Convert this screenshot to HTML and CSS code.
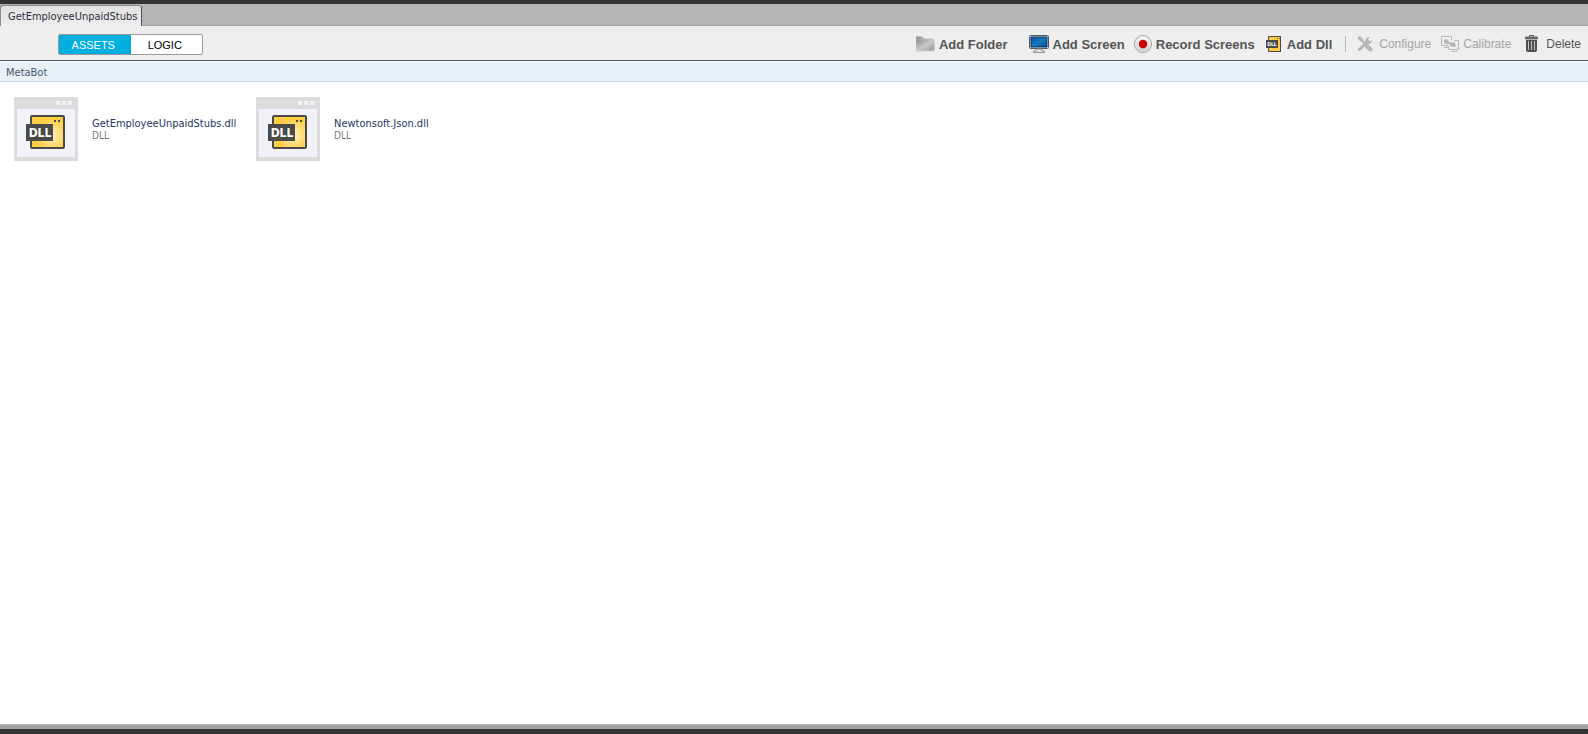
FILE: index.html
```html
<!DOCTYPE html>
<html lang="en">
<head>
  <meta charset="UTF-8" />
  <meta name="viewport" content="width=device-width, initial-scale=1.0"/>
  <title>GetEmployeeUnpaidStubs</title>
  <link rel="stylesheet" href="styles.css">
</head>
<body>

  <!-- Shared gradients -->
  <svg class="defs" aria-hidden="true">
    <defs>
      <radialGradient id="dllGold" cx="0.62" cy="0.6" r="0.5">
        <stop offset="0" stop-color="#fff1c4"/>
        <stop offset="1" stop-color="#ffce45"/>
      </radialGradient>
      <linearGradient id="folderGrey" x1="0" y1="0" x2="1" y2="1">
        <stop offset="0" stop-color="#8c8c8c"/>
        <stop offset="0.5" stop-color="#c9c9c9"/>
        <stop offset="1" stop-color="#999"/>
      </linearGradient>
      <linearGradient id="screenBlue" x1="0" y1="0" x2="1" y2="1">
        <stop offset="0" stop-color="#0a4f93"/>
        <stop offset="0.5" stop-color="#1679be"/>
        <stop offset="1" stop-color="#064c8d"/>
      </linearGradient>
      <linearGradient id="recordGrey" x1="0" y1="0" x2="0" y2="1">
        <stop offset="0" stop-color="#fff"/>
        <stop offset="1" stop-color="#c4c4c4"/>
      </linearGradient>
    </defs>
  </svg>

  <nav class="tabs">
    <button class="tab">GetEmployeeUnpaidStubs</button>
  </nav>

  <header class="toolbar">
    <div class="switch">
      <button class="active">ASSETS</button>
      <button>LOGIC</button>
    </div>

    <div class="actions">
      <button class="action strong folder">
        <svg width="20" height="20" viewBox="0 0 20 20">
          <path d="M1 3.500q0-1 1-1h5l2 2h8q1 0 1 1v10q0 1-1 1H2q-1 0-1-1z" fill="url(#folderGrey)"/>
          <path d="M0 17h20" stroke="#d0d0d0"/>
          <path d="M2 6.500h7l2-1h8.500v10q0 1-1 1H3q-1 0-1-1z" fill="url(#folderGrey)"/>
        </svg>
        Add Folder
      </button>
      <button class="action strong screen">
        <svg width="20" height="20" viewBox="0 0 20 20">
          <rect x="0.500" y="1.500" width="19" height="13" rx="1" fill="#e3e7e8" stroke="#50595d"/>
          <rect x="2" y="3" width="16" height="10" fill="url(#screenBlue)" stroke="#073764"/>
          <path d="M7 15h6v2h2.500v1.500h-11V17H7z" fill="#dfe4e4" stroke="#7b8583" stroke-width=".8"/>
        </svg>
        Add Screen
      </button>
      <button class="action strong record">
        <svg width="18" height="20" viewBox="0 0 18 20">
          <circle cx="9" cy="10" r="8.500" fill="url(#recordGrey)" stroke="#a3a3a3"/>
          <circle cx="9" cy="10" r="7.300" fill="none" stroke="#e8e8e8"/>
          <circle cx="9" cy="10" r="4.200" fill="#c00"/>
        </svg>
        Record Screens
      </button>
      <button class="action strong dll">
        <svg width="15" height="20" viewBox="0 0 15 20">
          <rect x="2.500" y="2.500" width="12" height="15" fill="#ffce45" stroke="#4a4a48"/>
          <path d="M11 4h1v1h-1zM13 4h1v1h-1z" fill="#4a4a48"/>
          <rect y="6" width="12" height="8" fill="#4a4a48"/>
          <text x="6" y="12" text-anchor="middle" class="dll-small">DLL</text>
        </svg>
        Add Dll
      </button>
      <span class="divider"></span>
      <button class="action configure" disabled>
        <svg width="16" height="20" viewBox="0 0 16 20">
          <path d="M2.500 15.500l8-8" stroke="#b5b5b5" stroke-width="3" stroke-linecap="round"/>
          <path d="M12.500 3a4 4 0 0 0-4 5.500 4 4 0 0 0 7-2.500l-2.500 1.500-1.700-1.700z" fill="#b5b5b5"/>
          <path d="M1 3l2-1 3 3 .5 1.500 3 3-1.500 1.500-3-3L3 7 .500 4z" fill="#b5b5b5"/>
          <path d="M10 12l3.500 3.500" stroke="#b5b5b5" stroke-width="4" stroke-linecap="round"/>
        </svg>
        Configure
      </button>
      <button class="action calibrate" disabled>
        <svg width="18" height="20" viewBox="0 0 18 20">
          <path d="M7 11.500H.5v-9h10V6M13 6.500h4.500v9h-10V12M3 13.500h4M10 17.500h6" fill="none" stroke="#b8b8b8"/>
          <path d="M3 6l2-1 2 1 1 2-1 2H4L3 8zM10 9l2-1 2 1 1 2-1 2h-3l-2-1z" fill="#b8b8b8"/>
          <path d="M6 8l6 3" stroke="#b8b8b8" stroke-width="2"/>
        </svg>
        Calibrate
      </button>
      <button class="action delete">
        <svg width="14" height="20" viewBox="0 0 14 20">
          <path d="M4.500 3V1.500h4V3" fill="none" stroke="#555"/>
          <path d="M.5 3h12v2H.5z" fill="#777" stroke="#4c4c4c" stroke-width=".7"/>
          <path d="M1 6h11v10q0 2-2 2H3q-2 0-2-2z" fill="#505050"/>
          <path d="M3.500 7v9M6.500 7v9M9.500 7v9" stroke="#c2c2c2"/>
        </svg>
        Delete
      </button>
    </div>
  </header>

  <div class="path">MetaBot</div>

  <main class="assets">
    <div class="asset">
      <svg width="64" height="64" viewBox="0 0 64 64">
        <rect width="64" height="64" fill="#dcdcdc"/>
        <rect x="3" y="12" width="58" height="48" fill="#f2f3fa"/>
        <path d="M42 4h4v4h-4zM48 4h4v4h-4zM54 4h4v4h-4z" fill="#f2f3fa"/>
        <rect x="17" y="19" width="33" height="32" rx="1" fill="url(#dllGold)" stroke="#4a4a48" stroke-width="2"/>
        <path d="M40 23h2v2h-2zM44 23h2v2h-2z" fill="#4a4a48"/>
        <rect x="12" y="27" width="27" height="17" fill="#4a4a48"/>
        <text x="26" y="40" text-anchor="middle" class="dll-text">DLL</text>
      </svg>
      <div>
        <div class="name">GetEmployeeUnpaidStubs.dll</div>
        <div class="type">DLL</div>
      </div>
    </div>
    <div class="asset">
      <svg width="64" height="64" viewBox="0 0 64 64">
        <rect width="64" height="64" fill="#dcdcdc"/>
        <rect x="3" y="12" width="58" height="48" fill="#f2f3fa"/>
        <path d="M42 4h4v4h-4zM48 4h4v4h-4zM54 4h4v4h-4z" fill="#f2f3fa"/>
        <rect x="17" y="19" width="33" height="32" rx="1" fill="url(#dllGold)" stroke="#4a4a48" stroke-width="2"/>
        <path d="M40 23h2v2h-2zM44 23h2v2h-2z" fill="#4a4a48"/>
        <rect x="12" y="27" width="27" height="17" fill="#4a4a48"/>
        <text x="26" y="40" text-anchor="middle" class="dll-text">DLL</text>
      </svg>
      <div>
        <div class="name">Newtonsoft.Json.dll</div>
        <div class="type">DLL</div>
      </div>
    </div>
  </main>

  <footer class="bottom"></footer>

</body>
</html>
```
FILE: styles.css
```css
* {
  box-sizing: border-box;
}
body {
  margin: 0;
  min-height: 100vh;
  display: flex;
  flex-direction: column;
  background: #fff;
  border-top: 4px solid #333;
  font-family: "DejaVu Sans Condensed", Tahoma, sans-serif;
  font-size: 11px;
}
button {
  font: inherit;
  margin: 0;
  padding: 0;
  border: none;
  background: none;
  color: inherit;
}
.defs {
  position: absolute;
  width: 0;
  height: 0;
}

/* Tabs */
.tabs {
  display: flex;
  height: 22px;
  padding-top: 1px;
  background: #b5b5b5;
  border-bottom: 1px solid #a0a0a0;
}
.tab {
  height: 21px;
  padding: 0 4px 0 7px;
  border: 1px solid #8c8c8c;
  border-right: 1px solid #555;
  border-bottom: none;
  border-radius: 3px 3px 0 0;
  background: linear-gradient(#e2e2e2, #eee);
  color: #302c3c;
}

/* Toolbar */
.toolbar {
  display: flex;
  justify-content: space-between;
  align-items: center;
  height: 35px;
  padding: 2px 7px 0 58px;
  background: #eee;
  border-bottom: 1px solid #555;
}
.switch {
  display: flex;
  width: 145px;
  height: 21px;
  border: 1px solid #999;
  border-radius: 2px;
  background: #fff;
  font-family: "Liberation Sans", Arial, sans-serif;
  color: #000;
}
.switch button {
  flex: 1;
  padding: 1px 3px 0 0;
}
.switch .active {
  background: #00aee0;
  color: #fff;
}
.actions {
  display: flex;
  align-items: center;
  font-family: "Liberation Sans", Arial, sans-serif;
  font-size: 12px;
  color: #555;
}
.action {
  display: flex;
  align-items: center;
  gap: 4px;
  white-space: nowrap;
}
.action:disabled {
  color: #a5a5a5;
}
.strong {
  font-size: 13px;
  font-weight: bold;
}
.screen {
  margin-left: 21px;
}
.record {
  margin-left: 9px;
}
.dll {
  margin-left: 11px;
}
.calibrate {
  margin-left: 10px;
}
.divider {
  width: 1px;
  height: 16px;
  margin: 0 11px 0 13px;
  background: #bbb;
}
.dll,
.configure {
  gap: 6px;
}
.delete {
  gap: 7px;
  margin-left: 14px;
}

/* Path */
.path {
  height: 21px;
  padding-left: 6px;
  border-top: 1px solid #fff;
  border-bottom: 1px solid #ccdae4;
  background: #e8f0f8;
  line-height: 21px;
  color: #465872;
}

/* Assets */
.assets {
  flex: 1;
  display: grid;
  grid-template-columns: repeat(auto-fill, 242px);
  align-content: start;
  padding: 15px 14px;
}
.asset {
  display: flex;
  align-items: center;
  gap: 14px;
}
.asset svg {
  flex: none;
}
.name {
  line-height: 13px;
  color: #1d3461;
}
.type {
  font-size: 10px;
  line-height: 12px;
  color: #777;
}
.dll-text {
  font: bold 12px "DejaVu Sans Condensed", sans-serif;
  fill: #fff;
}
.dll-small {
  font: bold 5px "DejaVu Sans Condensed", sans-serif;
  fill: #fff;
}

.bottom {
  height: 10px;
  background: linear-gradient(#bbb, #999 50%, #aaa);
  border-bottom: 5px solid #333;
}
```
